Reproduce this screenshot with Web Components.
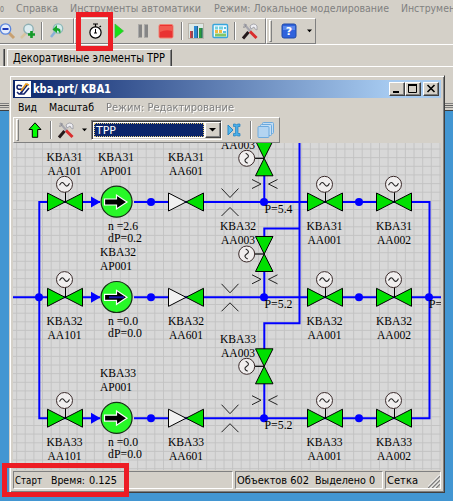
<!DOCTYPE html>
<html lang="ru">
<head>
<meta charset="utf-8">
<title>kba.prt</title>
<style>
html,body{margin:0;width:453px;height:501px;overflow:hidden;background:#4296d2}
</style>
</head>
<body>
<sim-desktop></sim-desktop>
<script>
const define = (name, html, setup) => customElements.define(name, class extends HTMLElement {
  constructor() { super(); this.attachShadow({mode: 'open'}); }
  connectedCallback() {
    this.shadowRoot.innerHTML = typeof html === 'function' ? html(this) : html;
  }
});

/* Label of a fixed width: w = text width, h = row height, b = baseline */
define('ui-label', el => {
  const w = el.getAttribute('w'), h = el.getAttribute('h') || 16, b = el.getAttribute('b') || 12;
  return `<style>:host{display:block;flex:none;width:${w}px;height:${h}px}svg{display:block;overflow:visible}
  text{font-family:"DejaVu Sans Condensed","DejaVu Sans",sans-serif;font-stretch:condensed;font-size:${el.getAttribute('size') || 11}px;font-weight:inherit;fill:currentColor;white-space:pre}</style>
  <svg width="${w}" height="${h}"><text x="0" y="${b}" textLength="${w}" lengthAdjust="spacingAndGlyphs">${el.textContent}</text></svg>`;
});

const icons = {
  minus: [16,'<path d="M9 10l5 5" stroke="#c8a070" stroke-width="3"/><circle cx="5.500" cy="6" r="5.200" fill="#e4ecfc" stroke="#5b86dc" stroke-width="1.300"/><path d="M2.500 6h6" stroke="#1c39b8" stroke-width="2"/>'],
  plus: [16,'<path d="M6 10l-5 5" stroke="#d6c4a0" stroke-width="2.500"/><circle cx="8.500" cy="6" r="4.700" fill="#dcecf0" stroke="#8eb0b4" stroke-width="1.400"/><path d="M11.500 8v7M8 11.500h7" stroke="#169a2a" stroke-width="2.600"/>'],
  back: [16,'<path d="M6 9l-4 5" stroke="#8ab0d8" stroke-width="2.500"/><circle cx="9" cy="5.500" r="4.700" fill="#d5ecec" stroke="#8eb8b8" stroke-width="1.300"/><path d="M11 11q2-6-3-6V2L3.500 6.500 8 10V7.500q2 0 3 3.500z" fill="#14a52a"/>'],
  timer: [16,'<path d="M6 1h5M8.500 1v3M12.500 4l1.500-1" stroke="#000" stroke-width="1.200" fill="none"/><circle cx="8.500" cy="9.500" r="5.600" fill="#fff" stroke="#000" stroke-width="1.200"/><path d="M8.500 6v4M7 10h3" stroke="#000"/>'],
  play: [9,'<path d="M0 1l8.500 7L0 15z" fill="#18e018" stroke="#38b838" stroke-width=".7"/>'],
  pause: [12,'<path d="M1 1.500h4v13H1zM7 1.500h4v13H7z" fill="#858585"/><path d="M1.500 2v12M7.500 2v12" stroke="#a8a8a8"/>'],
  stop: [16,'<rect x="1" y="1.500" width="14" height="13.500" rx="1.500" fill="#e93232" stroke="#f08070"/><path d="M2 3h12v5q-6-2-12 1z" fill="#f25a50"/>'],
  chart: [16,'<rect x=".5" y=".5" width="15" height="15" fill="#dce8e6" stroke="#b9b4aa"/><path d="M2 8h3v7H2z" fill="#e24040"/><path d="M6 3h4v12H6z" fill="#2b88d0"/><path d="M11 5h3.500v10H11z" fill="#299c3a"/><path d="M4 8v7M9.500 3v12M14 5v10" stroke="#27506f" stroke-width=".8"/>'],
  table: [16,'<rect x="1" y="1.500" width="14.500" height="13" rx="1" fill="#eff9ff" stroke="#36a5dc" stroke-width="1.400"/><path d="M3 3.500h3v3H3zM7 3.500h4v3H7z" fill="#76d1df"/><path d="M3 7h3v3H3zM7 7h3v3H7z" fill="#f0b840"/><path d="M3 10.500h11v3H3z" fill="#82c768"/><path d="M12 4h2v2h-2zM11 8h3v2h-3z" fill="#58bde0"/>'],
  tools: [16,'<path d="M1 15.500l9-11" stroke="#c9c9cc" stroke-width="2.200"/><path d="M1 15.500l5.500-6.500" stroke="#24191b" stroke-width="3"/><path d="M2 1l7 8" stroke="#a5a5ad" stroke-width="2"/><path d="M8 8.500l6.500 6.500" stroke="#da2d2d" stroke-width="3"/><path d="M8 3q4-4 7 0v4l-2-1-1-2-3 2z" fill="#ededf2" stroke="#9898a0" stroke-width=".8"/><path d="M1 4q3 1 3-3" stroke="#88888e" fill="none"/>'],
  help: [16,'<rect x="1" y="1" width="14" height="14" rx="2" fill="#2f62dc" stroke="#204aa8"/><path d="M2 3h12v4H2z" fill="#5b88ea"/><text x="8" y="12.300" text-anchor="middle" font-family="DejaVu Sans" font-size="11" font-weight="bold" fill="#fff">?</text>'],
  up: [14,'<path d="M7 .8l6 6.700H9.700v7.800H4.300V7.500H1z" fill="#00ff00" stroke="#000"/>'],
  cursor: [16,'<path d="M1 3l5 5-5 5z" fill="#53b8ee" stroke="#2688c8"/><path d="M6.500 2h2l1 1 1-1H13v2.500h-2v7h2V14H10.500l-1-1-1 1h-2v-2.500h2v-7h-2z" fill="#4aaee8" stroke="#237fbd" stroke-width=".7"/>'],
  stack: [17,'<g fill="#c4ddf3" stroke="#6caade" stroke-width="1"><rect x="5.500" y=".5" width="11" height="11" rx="1"/><rect x="3.500" y="2.500" width="11" height="11" rx="1"/><rect x="1" y="4.500" width="11" height="11" rx="1" fill="#b3d4f1"/></g>'],
  drop: [7,'<path d="M1 6.500h5L3.500 9.300z" fill="#000"/>'],
  app: [16,'<rect width="16" height="16" fill="#fff"/><g fill="none" stroke-width="1.600"><path d="M5 13l8-10M2 11l2 2h5l5-6" stroke="#15246e"/><path d="M7 5q-5-2-5 1t4 2q3 1 0 4" stroke="#15246e"/><path d="M6 10l5-7 3 1" stroke="#e99a1c"/></g>'],
};
define('ui-icon', el => { const [w, d] = icons[el.getAttribute('name')];
  return `<style>:host{display:block;flex:none;width:${w}px;height:16px}svg{display:block;overflow:visible}</style><svg width="${w}" height="16" fill="none">${d}</svg>`; });

define('tool-sep', `<style>:host{display:block;flex:none;width:1px;height:18px;background:#808080;border-right:1px solid #fff}</style>`);
define('tool-grip', `<style>:host{display:block;flex:none;width:1px;height:20px;background:#d4d0c8;border:1px solid;border-color:#fff #808080 #808080 #fff}</style>`);
define('tool-band', `<style>:host{display:flex;align-items:center;box-sizing:border-box;flex:none;height:26px;border:1px solid;border-color:#fff #808080 #808080 #fff}</style><slot></slot>`);

define('main-tools', `<style>:host{display:flex;height:26px;border-bottom:1px solid #fff}
tool-band{position:static}.a{width:74px;border-left:0}.b{width:192px}.c{width:50px}</style>
<tool-band class="a"><ui-icon name="minus"></ui-icon><ui-icon name="plus" style="margin-left:4px"></ui-icon><tool-sep style="margin-left:5px"></tool-sep><ui-icon name="back" style="margin-left:6px"></ui-icon></tool-band>
<tool-band class="b"><ui-icon name="timer" style="margin-left:12px"></ui-icon><ui-icon name="play" style="margin-left:12px"></ui-icon><ui-icon name="pause" style="margin-left:13px"></ui-icon><ui-icon name="stop" style="margin-left:9px"></ui-icon><tool-sep style="margin-left:7px"></tool-sep><ui-icon name="chart" style="margin-left:5px"></ui-icon><ui-icon name="table" style="margin-left:8px"></ui-icon><tool-sep style="margin-left:6px"></tool-sep><ui-icon name="tools" style="margin-left:6px"></ui-icon></tool-band>
<tool-band class="c"><tool-grip style="margin-left:2px"></tool-grip><ui-icon name="help" style="margin-left:9px"></ui-icon><ui-icon name="drop" style="margin-left:9px"></ui-icon></tool-band>`);

define('main-menu', `<style>:host{display:flex;height:18px;color:#808080;overflow:hidden}</style>
<ui-label w="4">о</ui-label><ui-label w="42" style="margin-left:12px">Справка</ui-label><ui-label w="131" style="margin-left:12px">Инструменты автоматики</ui-label><ui-label w="175" style="margin-left:13px">Режим: Локальное моделирование</ui-label><ui-label w="54" style="margin-left:12px">Инструмен</ui-label>`);

define('tab-strip', `<style>:host{display:flex;box-sizing:border-box;height:22px;padding-top:4px;border-bottom:1px solid #fff}
.p{width:4px;border-right:1px solid #404040;box-shadow:inset -1px 0 #808080}
.t{box-sizing:border-box;margin-left:2px;width:165px;height:17px;padding-left:5px;border:1px solid;border-color:#fff #404040 transparent #fff;border-bottom:0;box-shadow:inset -1px 0 #808080}</style>
<div class="p"></div><div class="t"><ui-label w="152" b="12" size="12">Декоративные элементы TPP</ui-label></div>`);

define('title-bar', `<style>:host{display:flex;align-items:center;height:18px;color:#fff;font-weight:bold;background:linear-gradient(90deg,#0a246a,#a6caf0 88%)}
.b{box-sizing:border-box;width:16px;height:14px;background:#d4d0c8;border:1px solid;border-color:#fff #404040 #404040 #fff;box-shadow:inset -1px -1px #808080}svg{display:block}</style>
<ui-icon name="app" style="margin-left:2px"></ui-icon><ui-label w="78" h="18" b="13" size="12" style="margin-left:2px;margin-right:auto">kba.prt/ KBA1</ui-label>
<div class="b"><svg width="14" height="12"><path d="M3 8h6v2H3z"/></svg></div>
<div class="b"><svg width="14" height="12"><path d="M2.500 2.500h8v7h-8zM2 2.500h9" fill="none" stroke="#000"/><path d="M2 1h9v2H2z"/></svg></div>
<div class="b" style="margin:0 2px"><svg width="14" height="12"><path d="M3.500 2l7 7M10.500 2l-7 7" stroke="#000" stroke-width="1.600"/></svg></div>`);

define('window-menu', `<style>:host{display:flex;height:19px;color:#000}.d{color:#808080;filter:drop-shadow(1px 1px 0 #fff)}</style>
<ui-label w="19" b="13" style="margin-left:5px">Вид</ui-label><ui-label w="45" b="13" style="margin-left:12px">Масштаб</ui-label><ui-label class="d" w="128" b="13" style="margin-left:12px">Режим: Редактирование</ui-label>`);

define('combo-box', `<style>:host{display:flex;box-sizing:border-box;flex:none;width:131px;height:20px;border:1px solid;border-color:#808080 #fff #fff #808080;background:#fff;color:#fff;box-shadow:inset 1px 1px #404040,inset -1px -1px #d4d0c8}
.v{box-sizing:border-box;width:110px;height:14px;margin:2px;margin-left:2px;background:#0a246a;border:1px dotted #e0c878;padding-left:1px}
.b{box-sizing:border-box;width:16px;height:16px;margin-top:1px;margin-left:-1px;background:#d4d0c8;border:1px solid;border-color:#fff #404040 #404040 #fff;box-shadow:inset -1px -1px #808080}svg{display:block}</style>
<div class="v"><ui-label w="20" h="12" b="10"><!---->TPP</ui-label></div><div class="b"><svg width="14" height="14"><path d="M3 5h7L6.500 8.500z"/></svg></div>`);

define('window-tools', `<style>:host{display:flex;height:26px}tool-band{width:267px}</style>
<tool-band><tool-grip style="margin-left:2px"></tool-grip><ui-icon name="up" style="margin-left:9px"></ui-icon><tool-sep style="margin-left:8px"></tool-sep><ui-icon name="tools" style="margin-left:6px"></ui-icon><ui-icon name="drop" style="margin-left:7px"></ui-icon><combo-box style="margin-left:3px"><slot></slot></combo-box><ui-icon name="cursor" style="margin-left:5px"></ui-icon><tool-sep style="margin-left:7px"></tool-sep><ui-icon name="stack" style="margin-left:5px"></ui-icon></tool-band>`);

/* Pipeline diagram: a free canvas, drawn in window-space units */
define('flow-canvas', () => {
  const t = (s, x, y, w) => `<text x="${x}" y="${y}" textLength="${w}" lengthAdjust="spacingAndGlyphs">${s}</text>`;
  const tag = (a, b, x, y) => t(a, x, y, 36) + t(b, x + 1, y + 14, 34);
  const dot = (x, y) => `<circle cx="${x}" cy="${y}" r="4" fill="#00f"/>`;
  const head = (x, y, r) => `<circle cx="${x}" cy="${y}" r="8" fill="#f0eeee" stroke="#3a2a2a"/><path d="M-5 1q2.500-5 5-1t5-1" transform="translate(${x} ${y}) rotate(${r})" fill="none" stroke="#222" stroke-width="1.100"/>`;
  const valve = (x, y, c) => `<g stroke="#000"><path d="M${x - 17.5} ${y - 9}v18L${x} ${y}z" fill="${c || '#00e000'}"/><path d="M${x + 17.5} ${y - 9}v18L${x} ${y}z" fill="#00e000"/></g>`;
  const motor = (x, y) => valve(x, y) + `<path d="M${x + .5} ${y}v-10" stroke="#000"/>` + head(x - .5, y - 17.7, 0);
  const vertical = (y) => `<path d="M255 ${y}h9" stroke="#000" stroke-width="1.200"/><g fill="#00e000" stroke="#000"><path d="M255.500 ${y - 17.5}h17.500L264.200 ${y}zM255.500 ${y + 17.5}h17.500L264.200 ${y}z"/></g>` + head(246.7, y, 90);
  const ys = [202, 297.3, 418.2], vs = [158.3, 254, 366.300];
  let pipes = 'M39.300 201V419.200M429.500 201V419.200M299.500 140V323.300H264.300V349M299.500 228.500H264.300V237M13 297.300H39M429 297.300H442', s = '';
  ys.forEach((y, i) => { pipes += `M39 ${y}H100M134 ${y}H429M264.300 ${vs[i] + 17}V${y}`; });
  ys.forEach((y, i) => {
    const n = i + 31, k = 'KBA' + n;
    s += motor(65, y) + `<path d="M91 ${y - 5.5}l9.500 5.500-9.500 5.500z" fill="#00f"/>`;
    s += `<circle cx="116.600" cy="${y - .3}" r="15.500" fill="#28f828" stroke="#153015" stroke-width="1.200"/><path d="M104.500 ${y - 3}h12v-4l10.500 7-10.500 7v-4h-12z" fill="#000" stroke="#fff" stroke-width="1.200"/>`;
    if (i == 1) s += `<path d="M109 ${y}h15" stroke="#1818b0" stroke-width="2"/>`;
    s += dot(151, y) + valve(186, y, '#f1f1f1') + dot(264, y) + motor(325, y) + dot(359, y) + motor(394, y) + vertical(vs[i]);
    s += `<g fill="none" stroke="#222"><path d="M221.500 ${y - 13.500}l8.500 9 8.500-9M221.500 ${y + 14}l8.500-8.500 8.500 8.500"/><path d="M252 ${y - 22.5}l9 4.500-9 4.500M277.500 ${y - 22.5}l-9 4.500 9 4.500"/></g>`;
    const ly = i ? y + 28 : 161, b = y + 28;
    s += tag(k, 'AA101', 46.5, ly) + tag(k, 'AA601', 168, ly);
    const p = [161, 255.700, 377][i];
    s += t(k, 98 + (i ? 2 : 0), p, 36) + t('AP001', 100, p + 14, 32);
    s += t('n =' + (i ? '0.0' : '2.6'), 108, b, 30) + t('dP=' + (i ? '0.0' : '0.2'), 108, b + 12, 34);
    s += tag(k, 'AA001', 306.5, b) + tag(k, 'AA002', 376, b);
    const q = [135, 230, 342.500][i];
    s += i ? tag(k, 'AA003', 220, q) : t('AA003', 221, 149, 34);
    s += t('P=' + (i ? '5.2' : '5.4'), 264.5, y + 10.5, 28);
  });
  s += dot(39, 297.3) + dot(429, 297.3) + t('P=', 429, 307.5, 13);
  let grid = '';
  for (let x = 319 - 8.64 * 35; x < 442; x += 8.64) if (x > 13) grid += `M${x.toFixed(1)} 143V470`;
  for (let y = 149; y < 470; y += 8.64) grid += `M13 ${y.toFixed(1)}H441`;
  return `<style>:host{display:block;height:327px;overflow:hidden;background:#d8d8d8}svg{display:block}
  text{font:13.500px "Liberation Serif",serif;fill:#000}</style>
  <svg width="428" height="327" viewBox="13 143 428 327"><path d="${grid}" stroke="#c2c2c2" stroke-width=".9"/><path d="${pipes}" fill="none" stroke="#00f" stroke-width="2"/>${s}</svg>`;
});

define('status-bar', `<style>:host{display:flex;gap:2px;height:19px;padding-top:1px;color:#000}
.p{box-sizing:border-box;display:flex;height:18px;border:1px solid;border-color:#808080 #fff #fff #808080;padding-left:1px}svg{margin-left:auto;flex:none}</style>
<div class="p" style="width:220px"><ui-label w="27" h="16" b="12" >Старт</ui-label><ui-label w="34" style="margin-left:9px">Время:</ui-label><ui-label w="28" style="margin-left:4px">0.125</ui-label></div>
<div class="p" style="width:148px"><ui-label w="72">Объектов 602</ui-label><ui-label w="60" style="margin-left:6px">Выделено 0</ui-label></div>
<div class="p" style="width:56px"><ui-label w="31">Сетка</ui-label><svg width="12" height="16"><path d="M0 16L12 4M4 16L12 8M8 16L12 12" stroke="#808080" stroke-width="1.500"/><path d="M-1.500 16L12 2.500M2.500 16L12 6.500M6.500 16L12 10.500" stroke="#fff"/></svg></div>`);

define('mdi-window', `<style>:host{display:flex;flex-direction:column;box-sizing:border-box;background:#d4d0c8;border:1px solid;border-color:#d4d0c8 #404040 #404040 #d4d0c8;box-shadow:inset 1px 1px #fff,inset -1px -1px #808080;padding:4px 3px 2px}</style><slot></slot>`);

define('red-mark', `<style>:host{display:block;box-sizing:border-box;border:5px solid #ed1c24}</style>`);

define('sim-desktop', `<style>:host{display:block;position:relative;width:453px;height:501px;overflow:hidden;background:#4296d2}
.top{height:111px;background:#d4d0c8;box-sizing:border-box;display:flex;flex-direction:column}
.edge{margin-top:auto;height:8px;background:linear-gradient(#808080 0 1px,#d4d0c8 1px 2px,#606060 2px 3px,#d4d0c8 3px 4px,#808080 4px 5px,#d4d0c8 5px 7px,#404040 7px)}
mdi-window{position:absolute;left:9px;top:75px;width:436px;height:418px}
.m1{position:absolute;left:76px;top:12px;width:37px;height:39px}
.m2{position:absolute;left:2px;top:463px;width:127px;height:34px}</style>
<div class="top"><main-menu></main-menu><main-tools></main-tools><tab-strip></tab-strip><div class="edge"></div></div>
<mdi-window><title-bar></title-bar><window-menu></window-menu><window-tools></window-tools><flow-canvas></flow-canvas><status-bar></status-bar></mdi-window>
<red-mark class="m1"></red-mark><red-mark class="m2"></red-mark>`);
</script>
</body>
</html>
